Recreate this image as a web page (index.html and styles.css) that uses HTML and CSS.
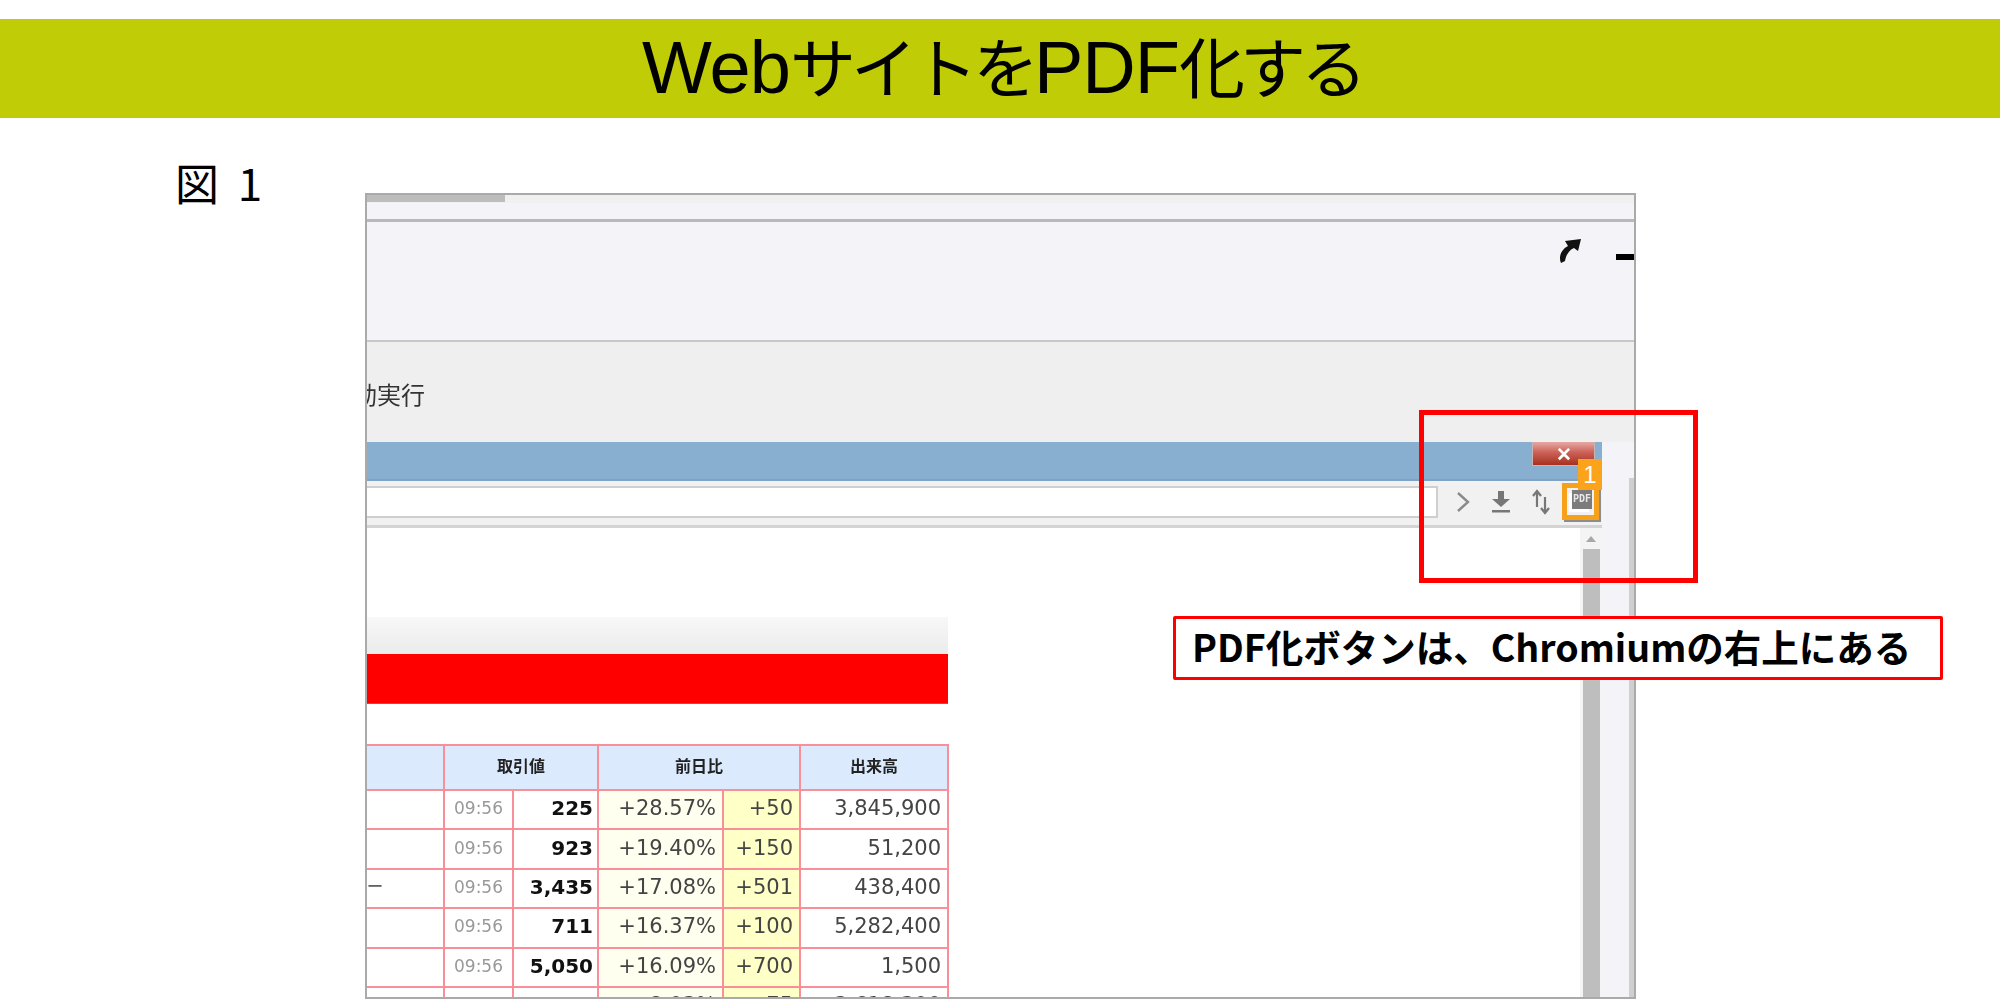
FILE: index.html
```html
<!DOCTYPE html>
<html lang="ja">
<head>
<meta charset="utf-8">
<title>WebサイトをPDF化する</title>
<link rel="stylesheet" href="styles.css">
</head>
<body>
<div class="slide">
  <header class="banner">
    <h1 class="title"><span class="lat">Web</span><span class="cjk">サイトを</span><span class="lat">PDF</span><span class="cjk">化する</span></h1>
  </header>
  <main class="content">
    <div class="figlabel">図 1</div>
    <div class="shot">
      <div class="tabstrip"><div class="thumb"></div></div>
      <div class="ribbon">
        <svg class="ico-arrow" width="23" height="24" viewBox="0 0 23 24"><path d="M2 24 C-1 17 3 10 9 7 L6 2 L22 0 L19 12 L15 9 C10 11 7 16 6 22 Z" fill="#111"/></svg>
        <div class="ico-dash"></div>
      </div>
      <div class="menu"><span class="menutext">動実行</span></div>
      <div class="window">
        <div class="main">
          <div class="titlebar"><div class="close">✕</div></div>
          <div class="toolbar">
            <div class="urlbox"></div>
            <svg class="tool" width="16" height="24" viewBox="0 0 16 24"><path d="M3 3 L13 12 L3 21" fill="none" stroke="#8a8a8a" stroke-width="2.4"/></svg>
            <svg class="tool" width="20" height="24" viewBox="0 0 20 24"><path d="M7 1 H13 V9 H19 L10 17 L1 9 H7 Z M1 20 H19 V22.5 H1 Z" fill="#777"/></svg>
            <svg class="tool" width="20" height="26" viewBox="0 0 20 26"><path d="M6 18 V4 M2 7 L6 2 L10 7 M14 8 V23 M10 19 L14 24 L18 19" fill="none" stroke="#777" stroke-width="2.2"/></svg>
            <div class="pdfbtn"><span class="pdfinner">PDF</span></div>
          </div>
          <div class="page">
            <div class="doc">
              <div class="greyhead"></div>
              <div class="redbar"></div>
              <table class="quotes">
                <colgroup><col class="c0"><col class="c1"><col class="c2"><col class="c3"><col class="c4"><col class="c5"></colgroup>
                <thead>
                  <tr><th></th><th colspan="2">取引値</th><th colspan="2">前日比</th><th>出来高</th></tr>
                </thead>
                <tbody>
                  <tr><td></td><td class="time">09:56</td><td class="price">225</td><td class="pct">+28.57%</td><td class="diff">+50</td><td class="vol">3,845,900</td></tr>
                  <tr><td></td><td class="time">09:56</td><td class="price">923</td><td class="pct">+19.40%</td><td class="diff">+150</td><td class="vol">51,200</td></tr>
                  <tr><td class="name">ー</td><td class="time">09:56</td><td class="price">3,435</td><td class="pct">+17.08%</td><td class="diff">+501</td><td class="vol">438,400</td></tr>
                  <tr><td></td><td class="time">09:56</td><td class="price">711</td><td class="pct">+16.37%</td><td class="diff">+100</td><td class="vol">5,282,400</td></tr>
                  <tr><td></td><td class="time">09:56</td><td class="price">5,050</td><td class="pct">+16.09%</td><td class="diff">+700</td><td class="vol">1,500</td></tr>
                  <tr><td></td><td class="time">09:56</td><td class="price">1,007</td><td class="pct">+8.03%</td><td class="diff">+75</td><td class="vol">3,618,300</td></tr>
                </tbody>
              </table>
            </div>
            <div class="vscroll"><div class="vup"></div><div class="vthumb"></div></div>
          </div>
        </div>
        <div class="side"><div class="sidestrip"></div></div>
      </div>
    </div>
  </main>
  <div class="badge">1</div>
  <div class="redframe"></div>
  <div class="callout">PDF化ボタンは、Chromiumの右上にある</div>
</div>
</body>
</html>
```

FILE: styles.css
```css
* { box-sizing: border-box; }
html, body { margin: 0; padding: 0; background: #fff; }
body { font-family: "Noto Sans CJK JP", "Noto Sans", sans-serif; }
.slide { position: relative; width: 2000px; height: 999px; overflow: hidden; padding-top: 19px; }

.banner { height: 99px; background: #c0cc06; display: flex; align-items: center; justify-content: center; }
.title { margin: 0 0 2px 4px; font-weight: 400; line-height: 1; color: #000; display: flex; align-items: baseline; white-space: nowrap; }
.lat { font-family: "Liberation Sans", sans-serif; font-size: 74px; letter-spacing: -1px; }
.cjk { font-family: "Noto Sans CJK JP", sans-serif; font-weight: 400; font-size: 66px; letter-spacing: -5px; }

.content { display: flex; align-items: flex-start; padding: 33px 0 0 175px; height: 882px; }
.figlabel { font-size: 44px; line-height: 62px; width: 190px; color: #000; flex: none; word-spacing: 9px; }
.shot { width: 1271px; height: 806px; margin-top: 42px; border: 2px solid #aaa; flex: none; overflow: hidden; display: flex; flex-direction: column; background: #f3f3f8; filter: blur(0.45px); }

.tabstrip { height: 27px; flex: none; background: linear-gradient(#f0f0f0 0 8px, #f3f3f8 8px); border-bottom: 3px solid #b9b9b9; }
.thumb { width: 138px; height: 7px; background: #bdbdbd; }
.ribbon { height: 120px; flex: none; background: #f3f3f8; border-bottom: 2px solid #c8c8c8; display: flex; justify-content: flex-end; align-items: flex-start; padding-top: 17px; }
.ico-arrow { margin-right: 34px; }
.ico-dash { width: 18px; height: 6px; background: #000; margin-top: 15px; }
.menu { height: 100px; flex: none; background: #efefef; padding-top: 36px; }
.menutext { display: block; width: 58px; height: 34px; overflow: hidden; direction: rtl; font-size: 24px; line-height: 32px; color: #333; white-space: nowrap; }

.window { flex: 1; display: flex; min-height: 0; }
.main { width: 1235px; flex: none; display: flex; flex-direction: column; }
.side { flex: 1; background: #f3f3f8; display: flex; justify-content: flex-end; padding-top: 36px; }
.sidestrip { width: 5px; background: #cfcfcf; }

.titlebar { height: 39px; flex: none; background: #88aed0; border-bottom: 2px solid #7fa3c6; display: flex; justify-content: flex-end; padding-right: 7px; }
.close { width: 63px; height: 24px; background: linear-gradient(#e8a8a4, #cb6258 45%, #a8301f); border: 1px solid #c9b4b4; border-top: 0; color: #fff; font-size: 19px; font-weight: 700; line-height: 22px; text-align: center; }

.toolbar { height: 47px; flex: none; background: #f1f1f1; border-bottom: 3px solid #d4d4d4; display: flex; align-items: center; padding-bottom: 3px; }
.urlbox { width: 1071px; height: 32px; background: #fff; border: 2px solid #cfcfcf; border-left: 0; flex: none; margin-right: 17px; }
.tool { flex: none; margin-right: 20px; }
.pdfbtn { width: 37px; height: 37px; flex: none; margin-left: -9px; border: 5px solid #f7a11a; background: #f1f1f1; padding: 2px 2px 6px 5px; box-shadow: 2px 2px 0 #8c8c8c; }
.pdfinner { display: block; height: 100%; background: #7c7c7c; box-shadow: -3px 3px 0 #fff; color: #e8e8e8; font-family: "DejaVu Sans Mono", monospace; font-size: 10px; font-weight: 700; line-height: 17px; text-align: center; }

.page { flex: 1; display: flex; min-height: 0; background: #fff; }
.doc { flex: 1; padding-top: 89px; overflow: hidden; }
.vscroll { width: 22px; flex: none; background: #f4f4f4; display: flex; flex-direction: column; align-items: center; }
.vup { width: 0; height: 0; margin-top: 8px; border: 5px solid transparent; border-top: 0; border-bottom: 6px solid #a8a8a8; }
.vthumb { width: 17px; flex: 1; margin-top: 7px; background: #bebebe; }

.greyhead { width: 581px; height: 37px; background: linear-gradient(#f8f8f8, #ebebeb); }
.redbar { width: 581px; height: 50px; background: #ff0000; border-bottom: 1px solid #6b6b8f; }

.quotes { margin-top: 40px; width: 581px; table-layout: fixed; border-collapse: collapse; font-family: "DejaVu Sans", sans-serif; color: #444; }
.c0 { width: 77px; } .c1 { width: 69px; } .c2 { width: 85px; } .c3 { width: 125px; } .c4 { width: 77px; } .c5 { width: 148px; }
.quotes th, .quotes td { border: 2px solid #f98f98; padding: 0; white-space: nowrap; overflow: hidden; }
.quotes th:first-child, .quotes td:first-child { border-left: 0; }
.quotes th { height: 45px; background: #dbeafd; padding-bottom: 6px; font-family: "Noto Sans CJK JP", sans-serif; font-size: 16px; font-weight: 700; color: #222; }
.quotes td { height: 39.4px; font-size: 21px; text-align: right; padding-right: 6px; padding-bottom: 3px; line-height: 24px; }
.quotes td.time { font-size: 17px; color: #999; text-align: center; padding-right: 0; }
.quotes td.price { font-weight: 700; color: #111; font-size: 20px; padding-right: 4px; }
.quotes td.pct { background: #fffff0; }
.quotes td.diff { background: #ffffc8; }
.quotes td.name { text-align: left; font-size: 16px; color: #555; padding-left: 0; }

.badge { position: absolute; left: 1578px; top: 459px; width: 24px; height: 31px; background: #fba31a; color: #fff; font-family: "Liberation Sans", sans-serif; font-size: 24px; line-height: 31px; text-align: center; }
.redframe { position: absolute; left: 1419px; top: 410px; width: 279px; height: 173px; border: 5px solid #ff0000; }
.callout { position: absolute; left: 1173px; top: 616px; width: 770px; height: 64px; background: #fff; border: 3px solid #ff0000; border-radius: 2px; padding-left: 16px; font-size: 37.5px; font-weight: 700; line-height: 54px; color: #000; white-space: nowrap; }
```
